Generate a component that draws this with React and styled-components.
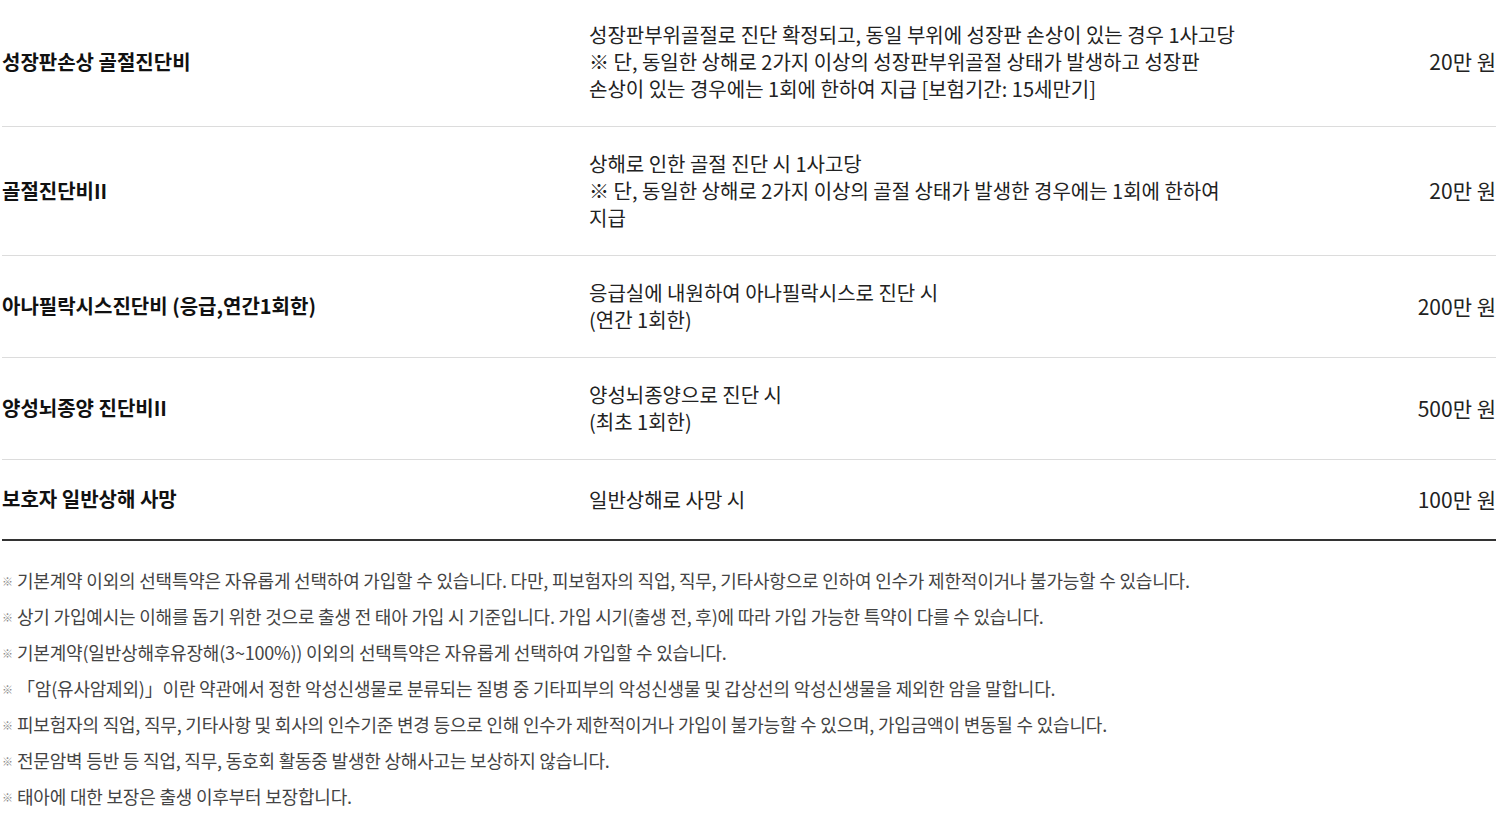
import React from "react";
import styled, { createGlobalStyle } from "styled-components";

const GlobalStyle = createGlobalStyle`
  body {
    margin: 0;
    background: #fff;
    font-family: "Noto Sans CJK KR", "Noto Sans", sans-serif;
  }
`;

const Wrap = styled.div`
  margin: -2px 6px 0 2px;
`;

const Table = styled.div`
  border-bottom: 2px solid #333;
`;

const Row = styled.div`
  display: grid;
  grid-template-columns: 587px 665px 1fr;
  align-items: center;
  padding: 23px 0 24px;
  & + & {
    border-top: 1px solid #dcdcdc;
  }
`;

const Title = styled.div`
  font-size: 20px;
  font-weight: 700;
  line-height: 32px;
  color: #111;
`;

const Desc = styled.div`
  font-size: 20px;
  line-height: 27px;
  color: #222;
  word-break: keep-all;
`;

const Amount = styled.div`
  font-size: 21px;
  line-height: 27px;
  color: #222;
  text-align: right;
`;

const Notes = styled.ul`
  list-style: none;
  margin: 0;
  padding: 26px 0 0;
`;

const Note = styled.li`
  position: relative;
  padding-left: 15px;
  font-size: 18px;
  line-height: 26px;
  letter-spacing: -0.2px;
  color: #444;
  margin-bottom: 10px;
  &::before {
    content: "※";
    position: absolute;
    left: 0;
    top: 1px;
    font-size: 11px;
    font-weight: 700;
    color: #8a8a8a;
  }
`;

const rows = [
  {
    title: "성장판손상 골절진단비",
    desc: [
      "성장판부위골절로 진단 확정되고, 동일 부위에 성장판 손상이 있는 경우 1사고당",
      "※ 단, 동일한 상해로 2가지 이상의 성장판부위골절 상태가 발생하고 성장판 손상이 있는 경우에는 1회에 한하여 지급 [보험기간: 15세만기]",
    ],
    amount: "20만 원",
  },
  {
    title: "골절진단비II",
    desc: [
      "상해로 인한 골절 진단 시 1사고당",
      "※ 단, 동일한 상해로 2가지 이상의 골절 상태가 발생한 경우에는 1회에 한하여 지급",
    ],
    amount: "20만 원",
  },
  {
    title: "아나필락시스진단비 (응급,연간1회한)",
    desc: ["응급실에 내원하여 아나필락시스로 진단 시", "(연간 1회한)"],
    amount: "200만 원",
  },
  {
    title: "양성뇌종양 진단비II",
    desc: ["양성뇌종양으로 진단 시", "(최초 1회한)"],
    amount: "500만 원",
  },
  {
    title: "보호자 일반상해 사망",
    desc: ["일반상해로 사망 시"],
    amount: "100만 원",
  },
];

const notes = [
  "기본계약 이외의 선택특약은 자유롭게 선택하여 가입할 수 있습니다. 다만, 피보험자의 직업, 직무, 기타사항으로 인하여 인수가 제한적이거나 불가능할 수 있습니다.",
  "상기 가입예시는 이해를 돕기 위한 것으로 출생 전 태아 가입 시 기준입니다. 가입 시기(출생 전, 후)에 따라 가입 가능한 특약이 다를 수 있습니다.",
  "기본계약(일반상해후유장해(3~100%)) 이외의 선택특약은 자유롭게 선택하여 가입할 수 있습니다.",
  "「암(유사암제외)」이란 약관에서 정한 악성신생물로 분류되는 질병 중 기타피부의 악성신생물 및 갑상선의 악성신생물을 제외한 암을 말합니다.",
  "피보험자의 직업, 직무, 기타사항 및 회사의 인수기준 변경 등으로 인해 인수가 제한적이거나 가입이 불가능할 수 있으며, 가입금액이 변동될 수 있습니다.",
  "전문암벽 등반 등 직업, 직무, 동호회 활동중 발생한 상해사고는 보상하지 않습니다.",
  "태아에 대한 보장은 출생 이후부터 보장합니다.",
];

export default function App() {
  return (
    <>
      <GlobalStyle />
      <Wrap>
        <Table>
          {rows.map((r) => (
            <Row key={r.title}>
              <Title>{r.title}</Title>
              <Desc>
                {r.desc.map((d, i) => (
                  <React.Fragment key={i}>
                    {i > 0 && <br />}
                    {d}
                  </React.Fragment>
                ))}
              </Desc>
              <Amount>{r.amount}</Amount>
            </Row>
          ))}
        </Table>
        <Notes>
          {notes.map((n) => (
            <Note key={n}>{n}</Note>
          ))}
        </Notes>
      </Wrap>
    </>
  );
}
